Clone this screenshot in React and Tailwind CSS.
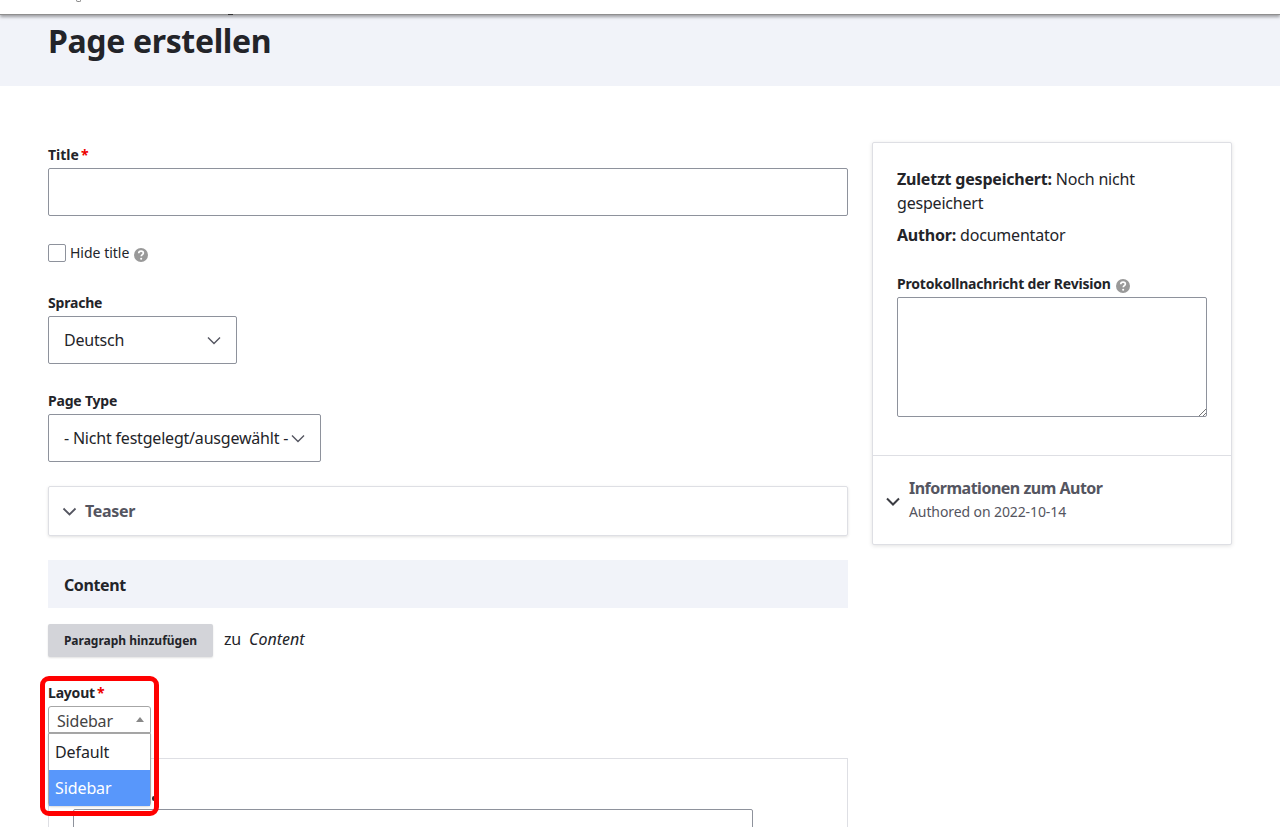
import React from 'react';

const Help = () => (
    <svg viewBox="0 0 16 16" className="w-[14px] h-[14px] shrink-0">
        <circle cx="8" cy="8" r="8" fill="#999" />
        <path d="M5.4 6c0-1.6 1.1-2.5 2.7-2.5s2.6.9 2.6 2.2c0 2-2.4 1.9-2.4 3.8" fill="none" stroke="#fff" strokeWidth="1.9" />
        <circle cx="8.2" cy="12.3" r="1.2" fill="#fff" />
    </svg>
);

const Chevron = ({ className, color = '#545560', width = 2 }) => (
    <svg viewBox="0 0 14 9" className={className}>
        <path d="M1 1.5l6 6 6-6" fill="none" stroke={color} strokeWidth={width} />
    </svg>
);

const Label = ({ children, required, className = '' }) => (
    <div className={`text-[14px] leading-[18px] font-bold text-[#232429] mb-1 ${className}`}>
        {children}
        {required && <span className="text-[#e00] ml-[2px]">*</span>}
    </div>
);

const Select = ({ value, width }) => (
    <div className={`${width} h-12 border border-[#8e929c] rounded-[2px] bg-white flex items-center justify-between pl-[15px] pr-[15px] text-[16px] text-[#232429]`}>
        <span className="whitespace-nowrap">{value}</span>
        <Chevron className="w-[14px] h-[9px] shrink-0" width={1.4} />
    </div>
);

const App = () => {
    return (
        <div className="h-[827px] overflow-hidden bg-white relative font-['Noto_Sans',sans-serif] tracking-[-0.2px] text-[#232429]">
            {/* Top toolbar, cut off by the scroll */}
            <div className="h-[15px] bg-white border-b border-[#8f8f8f] shadow-[0_2px_3px_rgba(0,0,0,0.35)] relative z-10">
                <span className="absolute left-[76px] top-0 w-[5px] h-[2px] border-b border-x border-[#888] rounded-b-[2px]"></span>
                <span className="absolute left-[228px] top-[14px] w-[5px] h-[1px] bg-[#333]"></span>
            </div>

            {/* Page title */}
            <div className="h-[71px] bg-[#f1f3f9] px-12">
                <h1 className="text-[32px] leading-[40px] pt-[6px] font-bold tracking-[-0.35px] text-[#232429]">Page erstellen</h1>
            </div>

            <div className="grid grid-cols-[800px_360px] gap-6 px-12 pt-[56px]">
                {/* Main form */}
                <div className="relative">
                    <div className="pt-[4px]">
                        <Label required className="tracking-[0px]">Title</Label>
                        <div className="h-12 border border-[#8e929c] rounded-[2px]"></div>
                    </div>

                    <div className="flex items-center mt-7 h-[18px]">
                        <div className="w-[18px] h-[18px] border border-[#8e929c] rounded-[2px]"></div>
                        <span className="text-[14px] ml-1 -mt-[2px] tracking-[0px] text-[#232429]">Hide title</span>
                        <span className="ml-[5px] mt-[3px]"><Help /></span>
                    </div>

                    <div className="mt-[32px]">
                        <Label>Sprache</Label>
                        <Select value="Deutsch" width="w-[189px]" />
                    </div>

                    <div className="mt-[28px]">
                        <Label>Page Type</Label>
                        <Select value="- Nicht festgelegt/ausgewählt -" width="w-[273px]" />
                    </div>

                    <div className="mt-6 h-[50px] border border-[#dedfe4] rounded-[2px] shadow-[0_1px_3px_rgba(0,0,0,0.12)] flex items-center pl-[13px]">
                        <Chevron className="w-[15px] h-[9px]" width={1.8} />
                        <span className="ml-[8px] text-[16px] font-bold tracking-[-0.3px] text-[#545560]">Teaser</span>
                    </div>

                    <div className="mt-6 h-12 bg-[#f1f3f9] flex items-center pl-4 pt-[2px] text-[16px] font-bold tracking-[-0.4px]">Content</div>

                    <div className="mt-4 flex items-center">
                        <div className="w-[165px] h-[33px] bg-[#d3d4d9] rounded-[2px] shadow-[0_1px_2px_rgba(0,0,0,0.12)] flex items-center justify-center text-[12px] font-bold tracking-[0px] text-[#232429]">
                            Paragraph hinzufügen
                        </div>
                        <span className="ml-[11px] -mt-[3px] text-[16px]">zu</span>
                        <em className="ml-[8px] -mt-[3px] text-[16px] tracking-[0px]">Content</em>
                    </div>

                    <div className="mt-[27px]">
                        <Label required>Layout</Label>
                        <div className="relative z-20 w-[103px] h-[27px] border border-[#a6a6a6] rounded-t-[3px] bg-white flex items-center justify-between pl-2 pr-[6px] pt-[2px] text-[16px] text-[#444]">
                            <span>Sidebar</span>
                            <span className="w-0 h-0 -mt-[2px] border-x-[4px] border-x-transparent border-b-[5px] border-b-[#888]"></span>
                        </div>
                    </div>

                    {/* Paragraph item behind the open dropdown */}
                    <div className="mt-[25px] border border-[#dedfe4] h-[120px] pt-[50px] pl-6">
                        <div className="w-[680px] h-12 border border-[#8e929c] rounded-[2px]"></div>
                    </div>
                    <span className="absolute z-10 left-[104px] top-[654px] w-[4px] h-[5px] rounded-full bg-[#333]"></span>

                    {/* Open dropdown list */}
                    <div className="absolute z-20 left-0 top-[591px] w-[103px] h-[73px] bg-white border border-[#a6a6a6] rounded-b-[3px] text-[16px] tracking-[-0.1px] shadow-[0_1px_2px_rgba(0,0,0,0.15)]">
                        <div className="h-[36px] flex items-center pl-[6px] text-[#232429]">Default</div>
                        <div className="h-[36px] flex items-center pl-[6px] bg-[#5897fb] text-white">Sidebar</div>
                    </div>

                    {/* Red highlight from the documentation */}
                    <div className="absolute z-30 left-[-8px] top-[534px] w-[119px] h-[140px] border-[5px] border-[#f00] rounded-[9px]"></div>
                </div>

                {/* Sidebar */}
                <div>
                    <div className="h-[403px] border border-[#dedfe4] rounded-[2px] shadow-[0_1px_4px_rgba(0,0,0,0.12)] bg-white">
                        <div className="h-[313px] border-b border-[#dedfe4] pt-6 px-6">
                            <p className="text-[16px] leading-6 w-[290px]"><strong>Zuletzt gespeichert:</strong> Noch nicht gespeichert</p>
                            <p className="text-[16px] leading-6 mt-2"><strong>Author:</strong> documentator</p>
                            <div className="flex items-center mt-[28px] text-[14px] font-bold leading-[18px]">
                                Protokollnachricht der Revision
                                <span className="ml-[5px] mt-[3px]"><Help /></span>
                            </div>
                            <div className="relative mt-[4px] w-[310px] h-[120px] border border-[#8e929c] rounded-[2px]">
                                <svg viewBox="0 0 8 8" className="absolute right-0 bottom-0 w-2 h-2">
                                    <path d="M1 8l7-7M5 8l3-3" stroke="#777" strokeWidth="1" />
                                </svg>
                            </div>
                        </div>
                        <div className="flex items-center pl-[13px] pt-[22px]">
                            <Chevron className="w-[14px] h-[9px] mt-[2px]" color="#3b3c42" />
                            <div className="ml-[9px]">
                                <div className="text-[16px] leading-[20px] font-bold tracking-[-0.5px] text-[#545560]">Informationen zum Autor</div>
                                <div className="text-[14px] leading-[20px] mt-[4px] tracking-[-0.1px] text-[#545560]">Authored on 2022-10-14</div>
                            </div>
                        </div>
                    </div>
                </div>
            </div>
        </div>
    );
};

export default App;
